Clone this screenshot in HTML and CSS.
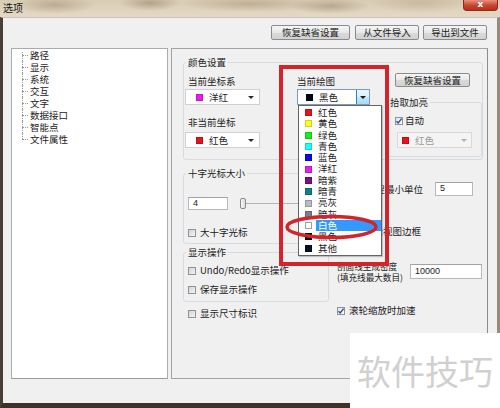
FILE: index.html
```html
<!DOCTYPE html>
<html lang="zh-CN">
<head>
<meta charset="utf-8">
<title>选项</title>
<link rel="stylesheet" href="styles.css">
</head>
<body>
<div class="window">
  <div class="titlebar">
    <span class="title">选项</span>
    <span class="close">x</span>
  </div>
  <div class="frame">
    <div class="toolbar">
      <button class="btn btn-wide">恢复缺省设置</button>
      <button class="btn">从文件导入</button>
      <button class="btn">导出到文件</button>
    </div>
    <div class="main">
      <ul class="tree">
        <li>路径</li>
        <li class="sel">显示</li>
        <li>系统</li>
        <li>交互</li>
        <li>文字</li>
        <li>数据接口</li>
        <li>智能点</li>
        <li>文件属性</li>
      </ul>
      <div class="panel">
        <fieldset class="grp grp-color">
          <legend>颜色设置</legend>
          <div class="color-grid">
            <div class="col col1">
              <div class="lbl">当前坐标系</div>
              <div class="combo combo-l mt2"><span class="sw sw-magenta"></span><span class="ctext">洋红</span><span class="tri"></span></div>
              <div class="lbl mt12">非当前坐标</div>
              <div class="combo combo-l mt4"><span class="sw sw-red"></span><span class="ctext">红色</span><span class="tri"></span></div>
            </div>
            <div class="col col2">
              <div class="lbl">当前绘图</div>
              <div class="combo combo-open mt2">
                <span class="sw sw-black"></span><span class="ctext">黑色</span>
                <span class="arrbtn"><span class="tri"></span></span>
                <ul class="dlist">
                  <li><span class="sw sw-red"></span><span class="itext">红色</span></li>
                  <li><span class="sw sw-yellow"></span><span class="itext">黄色</span></li>
                  <li><span class="sw sw-green"></span><span class="itext">绿色</span></li>
                  <li><span class="sw sw-cyan"></span><span class="itext">青色</span></li>
                  <li><span class="sw sw-blue"></span><span class="itext">蓝色</span></li>
                  <li><span class="sw sw-magenta"></span><span class="itext">洋红</span></li>
                  <li><span class="sw sw-purple"></span><span class="itext">暗紫</span></li>
                  <li><span class="sw sw-teal"></span><span class="itext">暗青</span></li>
                  <li><span class="sw sw-silver"></span><span class="itext">亮灰</span></li>
                  <li><span class="sw sw-gray"></span><span class="itext">暗灰</span></li>
                  <li class="hl"><span class="sw sw-white"></span><span class="itext">白色</span></li>
                  <li><span class="sw sw-black"></span><span class="itext">黑色</span></li>
                  <li><span class="sw sw-navy"></span><span class="itext">其他</span></li>
                </ul>
              </div>
            </div>
            <div class="col col3">
              <button class="btn btn-reset">恢复缺省设置</button>
              <fieldset class="grp grp-pick">
                <legend>拾取加亮</legend>
                <div class="cbrow pick-auto"><span class="cb on"><svg viewBox="0 0 8 8" width="8" height="8"><path d="M1.5 4.2 L3.2 6 L6.6 1.6" fill="none" stroke="#2b4f95" stroke-width="1.4"/></svg></span><span>自动</span></div>
                <div class="combo combo-dis"><span class="sw sw-red"></span><span class="ctext">红色</span><span class="tri"></span></div>
              </fieldset>
            </div>
          </div>
        </fieldset>
        <div class="lower">
          <div class="lcol">
            <fieldset class="grp grp-cross">
              <legend>十字光标大小</legend>
              <div class="slider-row">
                <span class="tbox tbox-4">4</span>
                <span class="thumb"></span>
                <span class="track"></span>
              </div>
              <div class="cbrow cross-big"><span class="cb"></span><span>大十字光标</span></div>
            </fieldset>
            <fieldset class="grp grp-ops">
              <legend>显示操作</legend>
              <div class="cbrow ops1"><span class="cb"></span><span>Undo/Redo显示操作</span></div>
              <div class="cbrow ops2"><span class="cb"></span><span>保存显示操作</span></div>
            </fieldset>
            <div class="cbrow dims"><span class="cb"></span><span>显示尺寸标识</span></div>
          </div>
          <div class="rcol">
            <div class="unit-row"><span>捕捉最小单位</span><span class="tbox tbox-5">5</span></div>
            <div class="cbrow view-border"><span class="cb"></span><span>显示视图边框</span></div>
            <div class="hatch-row">
              <span class="hatch-lbl">剖面线生成密度<br>(填充线最大数目)</span>
              <span class="tbox tbox-10000">10000</span>
            </div>
            <div class="cbrow wheel"><span class="cb on"><svg viewBox="0 0 8 8" width="8" height="8"><path d="M1.5 4.2 L3.2 6 L6.6 1.6" fill="none" stroke="#2b4f95" stroke-width="1.4"/></svg></span><span>滚轮缩放时加速</span></div>
          </div>
        </div>
      </div>
    </div>
  </div>

  <div class="mark-rect"></div>
  <svg class="mark-ellipse" width="95" height="26" viewBox="0 0 95 26"><ellipse cx="47.5" cy="13" rx="44.5" ry="10.5" fill="none" stroke="#d3232b" stroke-width="3.5"/></svg>
  <div class="watermark">软件技巧</div>
</div>
</body>
</html>
```

FILE: styles.css
```css
* { box-sizing: border-box; }
html, body { margin: 0; padding: 0; }
body {
  width: 500px;
  height: 408px;
  overflow: hidden;
  font-family: "Noto Sans CJK SC", "Noto Sans", "DejaVu Sans", sans-serif;
  font-size: 9.5px;
  color: #1b1b1b;
}
ul { list-style: none; margin: 0; padding: 0; }

.window {
  position: relative;
  width: 500px;
  height: 408px;
  display: flex;
  flex-direction: column;
  background: #f0f0f0;
  overflow: hidden;
}

/* title bar */
.titlebar {
  flex: none;
  height: 17px;
  display: flex;
  align-items: flex-start;
  background:
    radial-gradient(ellipse 40px 9px at 55px 5px, rgba(150,125,95,.45), transparent),
    radial-gradient(ellipse 30px 8px at 150px 3px, rgba(140,118,90,.5), transparent),
    radial-gradient(ellipse 70px 8px at 250px 4px, rgba(160,135,100,.45), transparent),
    radial-gradient(ellipse 40px 8px at 330px 6px, rgba(140,118,90,.45), transparent),
    radial-gradient(ellipse 50px 10px at 420px 3px, rgba(170,145,110,.35), transparent),
    linear-gradient(#d9ccb4, #e4d9c6);
}
.title {
  font-size: 10px;
  line-height: 16px;
  padding-left: 3px;
  color: #141414;
}
.close {
  margin-left: auto;
  margin-right: 2px;
  width: 35px;
  height: 11px;
  border: 1px solid #8a2b1e;
  border-top: none;
  border-radius: 0 0 4px 4px;
  background: linear-gradient(#e6907f, #c8452f 55%, #b8301d);
  color: #fff;
  font-family: "DejaVu Sans", sans-serif;
  font-weight: bold;
  font-size: 9px;
  line-height: 9px;
  text-align: center;
}

/* frame */
.frame {
  flex: 1;
  display: flex;
  flex-direction: column;
  border-top: 1px solid #c9c3bb;
  border-left: 3px solid #4b3e33;
  border-right: 3px solid #948a80;
  border-bottom: 5px solid #3d3128;
}

.toolbar {
  flex: none;
  display: flex;
  justify-content: flex-end;
  gap: 4px;
  height: 22px;
  padding: 7px 10px 0 0;
}
.btn {
  height: 15px;
  width: 64px;
  padding: 0;
  margin: 0;
  border: 1px solid #8b8b8b;
  border-radius: 2px;
  background: linear-gradient(#f6f6f6, #e8e8e8 50%, #dadada 51%, #d2d2d2);
  font-family: inherit;
  font-size: 9.5px;
  line-height: 13px;
  color: #1b1b1b;
}
.btn-wide { width: 79px; margin-right: 1px; }

.main {
  flex: none;
  display: flex;
  gap: 3px;
  margin-top: 8px;
  padding-left: 8px;
  height: 331px;
}

/* tree */
.tree {
  width: 157px;
  height: 331px;
  background: #fff;
  border: 1px solid #a9adb2;
  border-bottom-color: #9a9a9a;
  padding-left: 10px;
}
.tree li {
  position: relative;
  height: 12px;
  line-height: 12px;
  padding-left: 8px;
}
.tree li::before {
  content: "";
  position: absolute;
  left: 0;
  top: 6px;
  width: 6px;
  border-top: 1px dotted #9a9a9a;
}
.tree li::after {
  content: "";
  position: absolute;
  left: 0;
  top: 0;
  bottom: 0;
  border-left: 1px dotted #9a9a9a;
}
.tree li:first-child::after { top: 3px; }
.tree li:last-child::after { bottom: 6px; }

/* panel */
.panel {
  width: 317px;
  height: 331px;
  border: 1px solid #a4a4a4;
  border-right-color: #8c8c8c;
  padding: 8px 4px 0 11px;
}

.grp {
  margin: 0;
  min-width: 0;
  border: 1px solid #d6dbe0;
  border-radius: 3px;
  padding: 0 0 0 4px;
}
.grp legend {
  padding: 0 2px;
  margin-left: -2px;
  line-height: 11px;
  font-size: 9.5px;
}

.grp-color { width: 300px; padding-bottom: 2px; }
.color-grid {
  display: grid;
  grid-template-columns: 109px 88px 97px;
}
.col1, .col2 { padding-top: 8px; }
.lbl { height: 11px; line-height: 11px; white-space: nowrap; }
.mt2 { margin-top: 2px; }
.mt4 { margin-top: 4px; }
.mt12 { margin-top: 12px; }

.combo {
  position: relative;
  display: flex;
  align-items: center;
  height: 16px;
  background: #fff;
  border: 1px solid #cfcfcf;
  line-height: 12px;
}
.combo-l {
  width: 75px;
  margin-left: -3px;
  padding-left: 10px;
}
.combo-l .sw { margin-right: 6px; }
.combo .tri { margin-left: auto; margin-right: 5px; }
.ctext { white-space: nowrap; }

.tri {
  display: block;
  width: 0;
  height: 0;
  border-left: 3px solid transparent;
  border-right: 3px solid transparent;
  border-top: 3px solid #2a2a2a;
}

.combo-open {
  width: 73px;
  padding-left: 8px;
  border-color: #7a9cbf;
}
.combo-open .sw { margin-right: 6px; }
.arrbtn {
  margin-left: auto;
  align-self: stretch;
  width: 13px;
  display: flex;
  align-items: center;
  justify-content: center;
  border-left: 1px solid #3c7fb1;
  background: linear-gradient(#eaf6fd, #d9f0fc 50%, #bee6fd 51%, #a7d9f5);
}
.arrbtn .tri { margin: 0; border-top-color: #1c1c1c; }

.dlist {
  position: absolute;
  left: 0;
  top: 15px;
  width: 84px;
  height: 151px;
  background: #fff;
  border: 1px solid #646464;
  padding: 1px 0;
  z-index: 5;
  box-shadow: 1px 1px 1px rgba(0,0,0,.2);
}
.dlist li {
  display: flex;
  align-items: center;
  height: 11.3px;
  padding-left: 6px;
  line-height: 11px;
}
.dlist .sw { margin-right: 4px; }
.itext {
  flex: 1;
  padding-left: 2px;
  height: 100%;
  line-height: 11.3px;
}
.dlist li.hl .itext { background: #3399ff; color: #fff; }

.sw {
  flex: none;
  display: block;
  width: 7px;
  height: 7px;
  border: 1px solid rgba(0,0,0,.18);
}
.sw-red { background: #e3141f; }
.sw-yellow { background: #ffff1a; }
.sw-green { background: #1aee1a; }
.sw-cyan { background: #1affff; }
.sw-blue { background: #0a0af0; }
.sw-magenta { background: #e81ee8; }
.sw-purple { background: #7b0f84; }
.sw-teal { background: #0f8088; }
.sw-silver { background: #b9bcc0; }
.sw-gray { background: #7c8088; }
.sw-white { background: #fff; border-color: #9aa0a8; }
.sw-black { background: #050510; }
.sw-navy { background: #05102a; }

.col3 { padding-top: 5px; }
.btn-reset {
  display: block;
  width: 75px;
  height: 14px;
  margin-left: 10px;
  line-height: 12px;
}
.grp-pick {
  margin-top: 10px;
  padding: 0 0 8px 4px;
}
.cbrow {
  display: flex;
  align-items: center;
  gap: 4px;
  height: 11px;
  line-height: 11px;
  white-space: nowrap;
}
.cb {
  flex: none;
  display: block;
  width: 8px;
  height: 8px;
  border: 1px solid #8f9296;
  background: linear-gradient(135deg, #d2d4d6, #f4f4f4);
}
.cb svg { display: block; margin: -1px 0 0 -1px; }
.cb.on { background: linear-gradient(135deg, #e4e6e8, #fbfbfb); }
.pick-auto { margin-top: 7px; margin-left: 5px; gap: 2px; }
.combo-dis {
  margin-top: 6px;
  margin-left: 7px;
  width: 75px;
  padding-left: 4px;
  color: #9a9a9a;
  border-color: #d9d9d9;
  background: #f4f4f4;
}
.combo-dis .sw { margin-right: 6px; }
.combo-dis .tri { border-top-color: #b0b0b0; margin-right: 4px; }

/* lower section */
.lower {
  display: grid;
  grid-template-columns: 146px 150px;
  column-gap: 4px;
}
.lcol { display: flex; flex-direction: column; }
.grp-cross { margin-top: 8px; padding-bottom: 5px; }
.slider-row {
  display: flex;
  align-items: center;
  height: 13px;
  margin-top: 18px;
}
.tbox {
  display: block;
  height: 13px;
  background: #fff;
  border: 1px solid #b5b9bf;
  border-top-color: #9ea3a9;
  padding-left: 4px;
  line-height: 11px;
  font-size: 9px;
  font-family: "Liberation Sans", "Noto Sans", sans-serif;
}
.tbox-4 { width: 40px; }
.thumb {
  width: 6px;
  height: 11px;
  margin-left: 12px;
  border: 1px solid #8a8a8a;
  border-radius: 2px;
  background: linear-gradient(90deg, #f8f8f8, #dcdcdc);
}
.track {
  flex: 1;
  height: 1px;
  background: #b4b4b4;
  margin-right: 2px;
}
.cross-big { margin-top: 17px; }
.grp-ops { margin-top: 3px; padding-bottom: 6px; }
.ops1 { margin-top: 7px; }
.ops2 { margin-top: 8px; }
.dims { margin-top: 6px; margin-left: 5px; }

.rcol { display: flex; flex-direction: column; }
.unit-row {
  display: flex;
  align-items: center;
  justify-content: flex-end;
  gap: 12px;
  height: 14px;
  margin-top: 22px;
  padding-right: 10px;
  white-space: nowrap;
}
.tbox-5 { width: 38px; height: 14px; }
.view-border { margin-top: 30px; margin-left: 19px; }
.hatch-row {
  display: flex;
  align-items: center;
  height: 21px;
  margin-top: 24px;
  padding: 0 1px 0 4px;
}
.hatch-lbl {
  font-size: 8.6px;
  line-height: 10.5px;
  white-space: nowrap;
}
.tbox-10000 {
  margin-left: auto;
  width: 72px;
  height: 15px;
  line-height: 13px;
}
.wheel { margin-top: 23px; margin-left: 4px; }

/* annotations over the screenshot */
.mark-rect {
  position: absolute;
  left: 279px;
  top: 65px;
  width: 110px;
  height: 201px;
  border: 4px solid #d3232b;
  z-index: 10;
}
.mark-ellipse {
  position: absolute;
  left: 284px;
  top: 214px;
  z-index: 11;
}
.watermark {
  position: absolute;
  left: 350px;
  top: 333px;
  width: 150px;
  height: 75px;
  background: #fff;
  color: #d0d0d0;
  font-size: 34px;
  line-height: 75px;
  padding-left: 7px;
  z-index: 12;
}
```
